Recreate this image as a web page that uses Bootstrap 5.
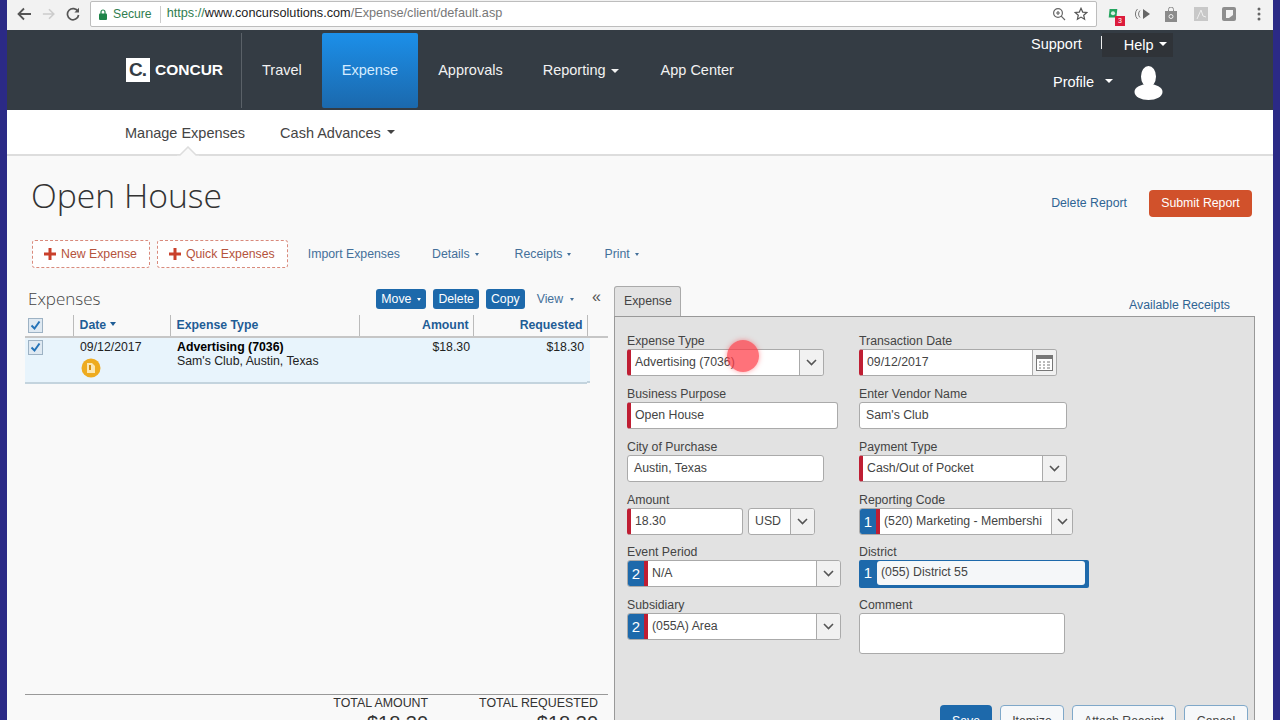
<!DOCTYPE html>
<html lang="en">
<head>
    <meta charset="UTF-8">
    <title>Open House - Concur</title>
    <link href="https://cdn.jsdelivr.net/npm/bootstrap@5.3.0/dist/css/bootstrap.min.css" rel="stylesheet">
    <style>
        html, body { height: 720px; overflow: hidden; }
        body { background: #2b2a86; font-family: "Liberation Sans", Arial, sans-serif; font-size: 12.3px; color: #333; }
        .shell { margin: 0 7px; height: 720px; overflow: hidden; background: #f9f9f9; }

        /* browser bar */
        .chrome-bar { height: 30px; background: #f2f2f2; padding: 1px 0 3px 0; }
        .chrome-nav { width: 83px; padding-left: 9px; gap: 10px; }
        .addr { width: 1007px; height: 26px; background: #fff; border: 1px solid #bdbdbd; border-radius: 2px; padding: 0 8px; font-size: 12.7px; color: #777; }
        .addr-secure { color: #2f7d4f; margin-left: 6px; font-size: 12.2px; }
        .addr-sep { width: 1px; height: 17px; background: #ccc; margin: 0 6px 0 8px; }
        .addr-host { color: #222; }
        .addr-scheme { color: #2f7d4f; }
        .ext-icons { width: 169px; position: relative; }
        .ext-badge { position: absolute; left: 18px; top: 9px; width: 10px; height: 10px; background: #dc1c3c; color: #fff; font-size: 7px; line-height: 10px; text-align: center; }

        /* main nav */
        .top-nav { height: 80px; background: #343c44; color: #fff; font-size: 14.5px; padding: 3px 0 2px 119px; }
        .top-nav .dropdown-toggle::after { margin-left: 5px; }
        .logo-box { width: 116px; margin-top: -2px; }
        .logo-mark { width: 24px; height: 24px; background: #fff; color: #343c44; font-weight: 700; font-size: 19px; line-height: 24px; padding-left: 3px; letter-spacing: -1px; }
        .logo-text { font-weight: 700; font-size: 15.5px; margin-left: 5px; }
        .nav-item-top { padding: 0 20px; display: flex; align-items: center; color: #f2f2f2; text-decoration: none; }
        .nav-divider { border-left: 1px solid #5a6168; margin-left: -1px; }
        .nav-active { background: linear-gradient(#1c8fe9, #1b69ad); color: #d5ecff; border-radius: 2px; }
        .nav-caret-item { padding-right: 22px; }
        .util-nav { width: 260px; margin-left: auto; margin-right: 0; }
        .util-row { height: 24px; padding-left: 18px; }
        .util-help { background: #2f3338; width: 71px; height: 24px; padding-left: 22px; line-height: 24px; }
        .util-bar { width: 1px; height: 13px; background: #eee; margin: 0 0 5px 19px; }
        .profile-row { padding-left: 40px; margin-top: 9px; }
        .top-nav .profile-row .dropdown-toggle::after { margin-left: 11px; }
        .avatar { margin-left: 21px; }

        /* sub nav */
        .sub-nav { height: 46px; background: #fff; border-bottom: 2px solid #ddd; padding: 4px 0 0 118px; font-size: 14.5px; color: #444; position: relative; }
        .sub-nav a { color: #444; text-decoration: none; }
        .sub-nav .dropdown-toggle::after { margin-left: 6px; }
        .sub-notch { position: absolute; left: 170px; bottom: -2px; }

        /* page head */
        .page-head { height: 84px; padding: 0 21px 0 24px; }
        .page-title { font-family: "Open Sans", "Liberation Sans", sans-serif; font-weight: 300; font-size: 33.7px; color: #333; margin: 0 0 6px 0; }
        .head-actions { margin-top: 11px; }
        .link-quiet { color: #2f6493; text-decoration: none; font-size: 12.3px; }
        .btn-submit { background: #d1512b; color: #fff; font-size: 12.3px; width: 103px; height: 27px; padding: 0; border: 0; border-radius: 4px; margin-left: 22px; }

        /* toolbar */
        .tool-row { height: 28px; padding-left: 25px; margin-bottom: 18px; }
        .btn-dash { height: 28px; padding: 0 12px 0 11px; border: 1px dashed #d98a7c; border-radius: 3px; background: #fff; color: #b5533c; font-size: 12.3px; display: flex; align-items: center; gap: 5px; margin-right: 7px; }
        .tool-link { color: #44709a; text-decoration: none; font-size: 12.3px; }
        .tiny-caret.dropdown-toggle::after { margin-left: 5px; border-top-width: 3px; border-left-width: 2.5px; border-right-width: 2.5px; vertical-align: 2px; }

        /* panes */
        .panes { height: 470px; padding-left: 18px; }
        .left-pane { width: 583px; margin-right: 6px; }
        .right-pane { width: 641px; }
        .pane-head { height: 29px; }
        .pane-title { font-family: "Open Sans", "Liberation Sans", sans-serif; font-weight: 300; font-size: 17px; color: #444; margin: 0 0 4px 3px; }
        .btn-blue { background: #1d69ab; color: #fff; height: 20px; padding: 0 5px; font-size: 12.3px; line-height: 20px; border: 0; border-radius: 3px; margin: 0 7px 3px 0; }
        .btn-blue.dropdown-toggle::after { margin-left: 6px; }
        .view-link { color: #44709a; font-size: 12.3px; margin: 0 0 3px 5px; }
        .view-link.dropdown-toggle::after { margin-left: 7px; }
        .collapse-mark { font-size: 16px; color: #555; margin-left: 18px; margin-right: 7px; line-height: 16px; margin-bottom: 8px; }

        .exp-table { width: 583px; margin: 0; table-layout: fixed; --bs-table-bg: transparent; font-size: 12.3px; }
        .exp-table th { height: 22px; padding: 0 4px 0 6px; font-size: 12.3px; color: #1f5d96; border-bottom: 2px solid #c6c6c6; border-right: 1px solid #bbb; vertical-align: middle; background: transparent; }
        .exp-table th.no-rule { border-right: 0; }
        .exp-table th:first-child { padding-left: 3px; }
        .exp-table th .dropdown-toggle::after { border-top-width: 4px; border-left-width: 3px; border-right-width: 3px; margin-left: 4px; }
        .exp-table td { height: 45px; padding: 2px 3px 0 7px; vertical-align: top; background: #e8f4fc; border-bottom: 2px solid #c4d4de; color: #222; line-height: 14px; }
        .exp-table td:first-child { padding-left: 3px; }
        .exp-table td.pad-end { background: transparent; border: 0; padding: 0; }
        .pad-fill { width: 3px; height: 45px; background: #e8f4fc; border-bottom: 2px solid #c4d4de; }
        .chk { display: block; }
        .warn-dot { display: block; margin: 4px 0 0 1px; }
        .sum-row { border-top: 1px solid #999; height: 62px; padding-right: 10px; gap: 51px; font-size: 12.4px; color: #333; }
        .sum-cell { text-align: right; line-height: 15px; padding-top: 1px; }
        .sum-big { font-size: 20px; line-height: 24px; }

        /* expense form */
        .tab-strip { height: 30px; }
        .tab-one { width: 67px; height: 30px; background: #e2e2e2; border: 1px solid #aaa; border-bottom: 0; border-radius: 3px 3px 0 0; padding-left: 9px; line-height: 28px; position: relative; z-index: 1; margin-bottom: -1px; color: #444; }
        .avail { color: #2f6493; margin-right: 25px; padding-top: 10px; }
        .form-panel { height: 440px; background: #e2e2e2; border: 1px solid #999; border-bottom: 0; padding: 16px 6px 0 12px; }
        .form-wrap { display: grid; grid-template-columns: 232px 1fr; grid-template-rows: 53px 53px 53px 52px 53px 57px; }
        .fld-label { height: 16px; line-height: 16px; color: #444; }
        .fld { height: 27px; width: 198px; background: #fff; border: 1px solid #aaa; border-radius: 3px; overflow: hidden; color: #444; line-height: 25px; }
        .fld-txt { flex: 1 1 auto; padding-left: 6px; white-space: nowrap; overflow: hidden; }
        .fld-req { border-left: 4px solid #bf1e33; }
        .fld-req .fld-txt, .fld-num + .fld-txt { padding-left: 4px; }
        .fld-num { width: 16px; flex: none; background: #1d69ab; color: #fff; font-size: 15px; text-align: center; border-right: 4px solid #bf1e33; box-sizing: content-box; }
        .fld-drop { width: 24px; flex: none; background: #f1f1f1; border-left: 1px solid #aaa; display: flex; align-items: center; justify-content: center; }
        .fld-drop-sm { width: 21px; }
        .w-211 { width: 211px; }
        .w-208 { width: 208px; }
        .w-197 { width: 197px; }
        .w-116 { width: 116px; }
        .w-67 { width: 67px; margin-left: 5px; }
        .w-214 { width: 214px; }
        .fld-district { width: 230px; height: 28px; background: #1d69ab; border-radius: 2px; color: #fff; padding: 1px 4px 3px 0; }
        .fld-district-num { width: 18px; text-align: center; font-size: 15px; line-height: 23px; }
        .fld-district-in { flex: 1 1 auto; background: #f5f7f9; border-radius: 3px; color: #444; padding-left: 4px; line-height: 22px; }
        .fld-area { height: 41px; width: 206px; }
        .form-btns { margin-top: 51px; gap: 8px; }
        .btn-save { background: #1d69ab; color: #fff; width: 52px; height: 30px; padding: 3px 0 0; font-size: 12.3px; line-height: 15px; border: 0; border-radius: 4px 4px 0 0; display: block; }
        .btn-plain { background: #f6f8fa; color: #444; height: 30px; padding: 3px 0 0; font-size: 12.3px; line-height: 15px; border: 1px solid #7fa8c9; border-radius: 4px 4px 0 0; display: block; }

        .cursor-spot { position: absolute; left: 727px; top: 340px; width: 32px; height: 32px; border-radius: 50%; background: rgba(255, 60, 70, .72); box-shadow: 0 0 5px rgba(255, 60, 70, .5); }
    </style>
</head>
<body>
<div class="shell">

    <!-- browser toolbar -->
    <div class="chrome-bar d-flex align-items-center">
        <div class="chrome-nav d-flex align-items-center">
            <svg width="16" height="14" viewBox="0 0 16 14"><path d="M15 7H3M8 1.5 2.5 7 8 12.5" fill="none" stroke="#555" stroke-width="1.8"/></svg>
            <svg width="14" height="14" viewBox="0 0 16 14"><path d="M1 7h12M8 1.5 13.5 7 8 12.5" fill="none" stroke="#ccc" stroke-width="1.8"/></svg>
            <svg width="14" height="14" viewBox="0 0 14 14"><path d="M12 4.5A5.6 5.6 0 1 0 12.6 8" fill="none" stroke="#555" stroke-width="1.7"/><path d="M13 .8v4.6H8.4z" fill="#555"/></svg>
        </div>
        <div class="addr d-flex align-items-center">
            <svg width="8" height="11" viewBox="0 0 8 11"><path d="M2 5V3a2 2 0 0 1 4 0v2" fill="none" stroke="#1e8449" stroke-width="1.2"/><rect y="4.5" width="8" height="6.5" rx="1" fill="#1e8449"/></svg>
            <span class="addr-secure">Secure</span>
            <span class="addr-sep"></span>
            <span><span class="addr-scheme">https://</span><span class="addr-host">www.concursolutions.com</span>/Expense/client/default.asp</span>
            <span class="ms-auto d-flex align-items-center gap-2">
                <svg width="14" height="14" viewBox="0 0 14 14"><circle cx="6" cy="6" r="4.4" fill="none" stroke="#666" stroke-width="1.2"/><path d="M9.2 9.2 13 13M4 6h4M6 4v4" stroke="#666" stroke-width="1.2"/></svg>
                <svg width="14" height="14" viewBox="0 0 14 14"><path d="m7 1.3 1.7 3.8 4.1.4-3.1 2.7.9 4-3.6-2.1-3.6 2.1.9-4L1.2 5.5l4.1-.4z" fill="none" stroke="#555" stroke-width="1.2"/></svg>
            </span>
        </div>
        <div class="ext-icons d-flex align-items-center">
            <svg style="margin-left:10px" width="12" height="13" viewBox="0 0 14 15"><path d="M3 1h9l-1 10H2z" fill="#25a55f"/><circle cx="7" cy="6" r="2.4" fill="#d8f3e3"/></svg>
            <span class="ext-badge">3</span>
            <svg style="margin-left:16px" width="16" height="14" viewBox="0 0 16 14"><path d="M8 2v10l7-5z" fill="#666"/><path d="M5 3.5a5 5 0 0 0 0 7M2.5 2a7 7 0 0 0 0 10" fill="none" stroke="#777"/></svg>
            <svg style="margin-left:13px" width="14" height="15" viewBox="0 0 14 15"><path d="M1 4h12v11H1z" fill="#8b8b8b"/><path d="M4.5 4V2.5a2.5 2.5 0 0 1 5 0V4" fill="none" stroke="#8b8b8b"/><circle cx="7" cy="9.5" r="2" fill="none" stroke="#eee"/></svg>
            <svg style="margin-left:16px" width="14" height="14" viewBox="0 0 14 14"><rect width="14" height="14" fill="#c8c8c8"/><path d="M3 12 7 3l2 6 3 1" fill="none" stroke="#eee"/></svg>
            <svg style="margin-left:14px" width="14" height="14" viewBox="0 0 14 14"><rect width="14" height="14" rx="2" fill="#8e8e8e"/><path d="M4 3h7v5l-4 3H4z" fill="#f3f3f3"/></svg>
            <svg style="margin-left:21px" width="4" height="14" viewBox="0 0 4 14"><circle cx="2" cy="2" r="1.5" fill="#666"/><circle cx="2" cy="7" r="1.5" fill="#666"/><circle cx="2" cy="12" r="1.5" fill="#666"/></svg>
        </div>
    </div>

    <!-- main nav -->
    <nav class="top-nav d-flex">
        <div class="logo-box d-flex align-items-center">
            <span class="logo-mark">C.</span>
            <span class="logo-text">CONCUR</span>
        </div>
        <a class="nav-item-top nav-divider" href="#">Travel</a>
        <a class="nav-item-top nav-active" href="#">Expense</a>
        <a class="nav-item-top" href="#">Approvals</a>
        <a class="nav-item-top nav-caret-item dropdown-toggle" href="#">Reporting</a>
        <a class="nav-item-top" href="#">App Center</a>
        <div class="util-nav">
            <div class="util-row d-flex align-items-center">
                <span>Support</span>
                <span class="util-bar"></span>
                <span class="util-help dropdown-toggle">Help</span>
            </div>
            <div class="profile-row d-flex align-items-center">
                <span class="dropdown-toggle">Profile</span>
                <svg class="avatar" width="29" height="34" viewBox="0 0 29 34"><ellipse cx="14.5" cy="10.5" rx="7.5" ry="10.5" fill="#fff"/><ellipse cx="14.5" cy="26" rx="14" ry="8" fill="#fff"/></svg>
            </div>
        </div>
    </nav>

    <!-- sub nav -->
    <div class="sub-nav d-flex align-items-center">
        <a href="#">Manage Expenses</a>
        <a class="dropdown-toggle" style="margin-left:35px" href="#">Cash Advances</a>
        <svg class="sub-notch" width="22" height="10" viewBox="0 0 22 10"><path d="M0 9h3l8-8 8 8h3v1H0z" fill="#f9f9f9"/><path d="M0 9h3l8-8 8 8h3" fill="none" stroke="#ddd" stroke-width="1.5"/></svg>
    </div>

    <!-- report title -->
    <div class="page-head d-flex align-items-center">
        <h1 class="page-title">Open House</h1>
        <div class="head-actions ms-auto d-flex align-items-center">
            <a class="link-quiet" href="#">Delete Report</a>
            <button class="btn btn-submit" type="button">Submit Report</button>
        </div>
    </div>

    <!-- toolbar -->
    <div class="tool-row d-flex align-items-center">
        <button class="btn-dash" type="button"><svg width="12" height="12" viewBox="0 0 12 12"><path d="M6 0v12M0 6h12" stroke="#c9402b" stroke-width="3"/></svg>New Expense</button>
        <button class="btn-dash" type="button"><svg width="12" height="12" viewBox="0 0 12 12"><path d="M6 0v12M0 6h12" stroke="#c9402b" stroke-width="3"/></svg>Quick Expenses</button>
        <a class="tool-link" style="margin-left:13px" href="#">Import Expenses</a>
        <a class="tool-link tiny-caret dropdown-toggle" style="margin-left:32px" href="#">Details</a>
        <a class="tool-link tiny-caret dropdown-toggle" style="margin-left:36px" href="#">Receipts</a>
        <a class="tool-link tiny-caret dropdown-toggle" style="margin-left:33px" href="#">Print</a>
    </div>

    <div class="panes d-flex">
        <!-- expense list -->
        <div class="left-pane d-flex flex-column">
            <div class="pane-head d-flex align-items-center">
                <span class="pane-title">Expenses</span>
                <div class="ms-auto d-flex align-items-center">
                    <button class="btn btn-blue tiny-caret dropdown-toggle" type="button">Move</button>
                    <button class="btn btn-blue" type="button">Delete</button>
                    <button class="btn btn-blue" type="button">Copy</button>
                    <span class="view-link tiny-caret dropdown-toggle">View</span>
                    <span class="collapse-mark">«</span>
                </div>
            </div>
            <table class="table exp-table">
                <colgroup><col style="width:48px"><col style="width:97px"><col style="width:189px"><col style="width:114px"><col style="width:114px"><col></colgroup>
                <thead>
                    <tr>
                        <th><svg class="chk" width="15" height="15" viewBox="0 0 15 15"><rect x=".5" y=".5" width="14" height="14" fill="#dfe9f2" stroke="#9db2c4"/><path d="m3.5 7.5 3 3 5-7" fill="none" stroke="#2473b8" stroke-width="2"/></svg></th>
                        <th><span class="dropdown-toggle">Date</span></th>
                        <th>Expense Type</th>
                        <th class="text-end">Amount</th>
                        <th class="text-end">Requested</th>
                        <th class="no-rule"></th>
                    </tr>
                </thead>
                <tbody>
                    <tr>
                        <td><svg class="chk" width="15" height="15" viewBox="0 0 15 15"><rect x=".5" y=".5" width="14" height="14" fill="#dfe9f2" stroke="#9db2c4"/><path d="m3.5 7.5 3 3 5-7" fill="none" stroke="#2473b8" stroke-width="2"/></svg></td>
                        <td>09/12/2017
                            <svg class="warn-dot" width="20" height="20" viewBox="0 0 20 20"><circle cx="10" cy="10" r="9.5" fill="#eeab1f"/><path d="M6 5h5l3 3v7H6z" fill="#fbe7b3"/><path d="M9 7v5" stroke="#d48f10" stroke-width="2"/></svg>
                        </td>
                        <td><b class="text-black">Advertising (7036)</b><br>Sam's Club, Austin, Texas</td>
                        <td class="text-end">$18.30</td>
                        <td class="text-end">$18.30</td>
                        <td class="pad-end"><div class="pad-fill"></div></td>
                    </tr>
                </tbody>
            </table>
            <div class="flex-grow-1"></div>
            <div class="sum-row d-flex justify-content-end">
                <div class="sum-cell">TOTAL AMOUNT<div class="sum-big">$18.30</div></div>
                <div class="sum-cell">TOTAL REQUESTED<div class="sum-big">$18.30</div></div>
            </div>
        </div>

        <!-- expense form -->
        <div class="right-pane">
            <div class="tab-strip d-flex justify-content-between">
                <div class="tab-one">Expense</div>
                <a class="avail text-decoration-none" href="#">Available Receipts</a>
            </div>
            <div class="form-panel">
                <div class="form-wrap">
                    <div>
                        <div class="fld-label">Expense Type</div>
                        <div class="fld fld-req w-197 d-flex"><span class="fld-txt">Advertising (7036)</span><span class="fld-drop"><svg width="11" height="7" viewBox="0 0 11 7"><path d="m1 1 4.5 4.5L10 1" fill="none" stroke="#555" stroke-width="1.6"/></svg></span></div>
                    </div>
                    <div>
                        <div class="fld-label">Transaction Date</div>
                        <div class="fld fld-req d-flex"><span class="fld-txt">09/12/2017</span><span class="fld-drop"><svg width="17" height="16" viewBox="0 0 17 16"><rect x=".5" y=".5" width="16" height="15" fill="#fff" stroke="#777"/><rect width="17" height="4" fill="#777"/><path d="M3 7h2M7 7h2M11 7h3M3 10h2M7 10h2M11 10h3M3 13h2M7 13h2M11 13h3" stroke="#777"/></svg></span></div>
                    </div>
                    <div>
                        <div class="fld-label">Business Purpose</div>
                        <div class="fld fld-req w-211 d-flex"><span class="fld-txt">Open House</span></div>
                    </div>
                    <div>
                        <div class="fld-label">Enter Vendor Name</div>
                        <div class="fld w-208 d-flex"><span class="fld-txt">Sam's Club</span></div>
                    </div>
                    <div>
                        <div class="fld-label">City of Purchase</div>
                        <div class="fld w-197 d-flex"><span class="fld-txt">Austin, Texas</span></div>
                    </div>
                    <div>
                        <div class="fld-label">Payment Type</div>
                        <div class="fld fld-req w-208 d-flex"><span class="fld-txt">Cash/Out of Pocket</span><span class="fld-drop"><svg width="11" height="7" viewBox="0 0 11 7"><path d="m1 1 4.5 4.5L10 1" fill="none" stroke="#555" stroke-width="1.6"/></svg></span></div>
                    </div>
                    <div>
                        <div class="fld-label">Amount</div>
                        <div class="d-flex">
                            <div class="fld fld-req w-116 d-flex"><span class="fld-txt">18.30</span></div>
                            <div class="fld w-67 d-flex"><span class="fld-txt">USD</span><span class="fld-drop"><svg width="11" height="7" viewBox="0 0 11 7"><path d="m1 1 4.5 4.5L10 1" fill="none" stroke="#555" stroke-width="1.6"/></svg></span></div>
                        </div>
                    </div>
                    <div>
                        <div class="fld-label">Reporting Code</div>
                        <div class="fld w-214 d-flex"><span class="fld-num">1</span><span class="fld-txt">(520) Marketing - Membershi</span><span class="fld-drop fld-drop-sm"><svg width="11" height="7" viewBox="0 0 11 7"><path d="m1 1 4.5 4.5L10 1" fill="none" stroke="#555" stroke-width="1.6"/></svg></span></div>
                    </div>
                    <div>
                        <div class="fld-label">Event Period</div>
                        <div class="fld w-214 d-flex"><span class="fld-num">2</span><span class="fld-txt">N/A</span><span class="fld-drop"><svg width="11" height="7" viewBox="0 0 11 7"><path d="m1 1 4.5 4.5L10 1" fill="none" stroke="#555" stroke-width="1.6"/></svg></span></div>
                    </div>
                    <div>
                        <div class="fld-label">District</div>
                        <div class="fld-district d-flex"><span class="fld-district-num">1</span><span class="fld-district-in">(055) District 55</span></div>
                    </div>
                    <div>
                        <div class="fld-label">Subsidiary</div>
                        <div class="fld w-214 d-flex"><span class="fld-num">2</span><span class="fld-txt">(055A) Area</span><span class="fld-drop"><svg width="11" height="7" viewBox="0 0 11 7"><path d="m1 1 4.5 4.5L10 1" fill="none" stroke="#555" stroke-width="1.6"/></svg></span></div>
                    </div>
                    <div>
                        <div class="fld-label">Comment</div>
                        <div class="fld fld-area"></div>
                    </div>
                </div>
                <div class="form-btns d-flex justify-content-end">
                    <button class="btn btn-save" type="button">Save</button>
                    <button class="btn btn-plain" style="width:64px" type="button">Itemize</button>
                    <button class="btn btn-plain" style="width:104px" type="button">Attach Receipt</button>
                    <button class="btn btn-plain" style="width:64px" type="button">Cancel</button>
                </div>
            </div>
        </div>
    </div>
</div>

<!-- recorder's click highlight -->
<div class="cursor-spot"></div>

<script src="https://cdn.jsdelivr.net/npm/bootstrap@5.3.0/dist/js/bootstrap.bundle.min.js"></script>
</body>
</html>
